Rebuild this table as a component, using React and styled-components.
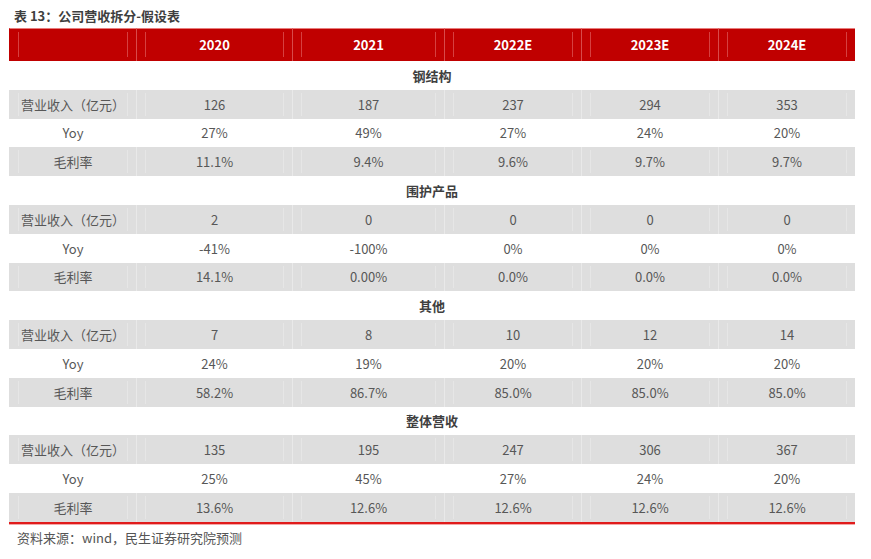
import React from "react";
import styled, { createGlobalStyle } from "styled-components";

const GlobalStyle = createGlobalStyle`
  body {
    margin: 0;
    background: #ffffff;
    font-family: "Noto Sans CJK SC", "Noto Sans", sans-serif;
  }
`;

const years = ["2020", "2021", "2022E", "2023E", "2024E"];

const sections = [
  {
    name: "钢结构",
    rows: [
      ["营业收入（亿元）", "126", "187", "237", "294", "353"],
      ["Yoy", "27%", "49%", "27%", "24%", "20%"],
      ["毛利率", "11.1%", "9.4%", "9.6%", "9.7%", "9.7%"],
    ],
  },
  {
    name: "围护产品",
    rows: [
      ["营业收入（亿元）", "2", "0", "0", "0", "0"],
      ["Yoy", "-41%", "-100%", "0%", "0%", "0%"],
      ["毛利率", "14.1%", "0.00%", "0.0%", "0.0%", "0.0%"],
    ],
  },
  {
    name: "其他",
    rows: [
      ["营业收入（亿元）", "7", "8", "10", "12", "14"],
      ["Yoy", "24%", "19%", "20%", "20%", "20%"],
      ["毛利率", "58.2%", "86.7%", "85.0%", "85.0%", "85.0%"],
    ],
  },
  {
    name: "整体营收",
    rows: [
      ["营业收入（亿元）", "135", "195", "247", "306", "367"],
      ["Yoy", "25%", "45%", "27%", "24%", "20%"],
      ["毛利率", "13.6%", "12.6%", "12.6%", "12.6%", "12.6%"],
    ],
  },
];

const Page = styled.div`
  width: 871px;
  height: 559px;
  padding: 7px 0 0 9px;
  box-sizing: border-box;
`;

const Title = styled.div`
  font-size: 13px;
  font-weight: 700;
  color: #3f3f3f;
  line-height: 18px;
  padding-left: 5px;
  height: 21px;
`;

const Table = styled.div`
  width: 846px;
  display: grid;
  grid-template-columns: 127px 156px 152px 137px 137px 137px;
  border-bottom: 2px solid #e01b1b;
  box-shadow: 0 1px 0 #f3a8a8;
`;

const Row = styled.div`
  display: contents;
`;

const Cell = styled.div`
  height: ${(p) => (p.$head ? "33px" : "28.8px")};
  background: ${(p) => (p.$head ? "#c00000" : p.$shade ? "#dedede" : "#ffffff")};
  border-left: 1px solid
    ${(p) => (p.$head ? "#d84a4a" : p.$shade ? "#e9e9e9" : "#ffffff")};
  border-top: ${(p) => (p.$head ? "1px solid #e87c7c" : "0")};
  box-sizing: border-box;
  padding: ${(p) => (p.$head ? "3px 8px 4px" : "3px 8px")};
  &:first-child {
    border-left-color: transparent;
  }
`;

const Inner = styled.div`
  height: 100%;
  display: flex;
  align-items: center;
  justify-content: center;
  border-left: 1px solid
    ${(p) => (p.$head ? "#d64040" : p.$shade ? "#e6e6e6" : "#ffffff")};
  border-right: 1px solid
    ${(p) => (p.$head ? "#d64040" : p.$shade ? "#e6e6e6" : "#ffffff")};
  font-size: 13px;
  font-weight: ${(p) => (p.$head ? 700 : 400)};
  color: ${(p) => (p.$head ? "#ffffff" : "#575757")};
  white-space: nowrap;
`;

const SectionCell = styled.div`
  grid-column: 1 / -1;
  height: 28.8px;
  display: flex;
  align-items: center;
  justify-content: center;
  font-size: 13px;
  font-weight: 700;
  color: #3f3f3f;
`;

const Source = styled.div`
  font-size: 13px;
  color: #555555;
  padding: 5px 0 0 8px;
  line-height: 18px;
`;

export default function App() {
  return (
    <Page>
      <GlobalStyle />
      <Title>表 13：公司营收拆分-假设表</Title>
      <Table>
        <Row>
          <Cell $head>
            <Inner $head />
          </Cell>
          {years.map((y) => (
            <Cell $head key={y}>
              <Inner $head>{y}</Inner>
            </Cell>
          ))}
        </Row>
        {sections.map((s) => (
          <React.Fragment key={s.name}>
            <SectionCell>{s.name}</SectionCell>
            {s.rows.map((r, i) => {
              const shade = i !== 1;
              return (
                <Row key={i}>
                  {r.map((v, j) => (
                    <Cell $shade={shade} key={j}>
                      <Inner $shade={shade}>{v}</Inner>
                    </Cell>
                  ))}
                </Row>
              );
            })}
          </React.Fragment>
        ))}
      </Table>
      <Source>资料来源：wind，民生证券研究院预测</Source>
    </Page>
  );
}
